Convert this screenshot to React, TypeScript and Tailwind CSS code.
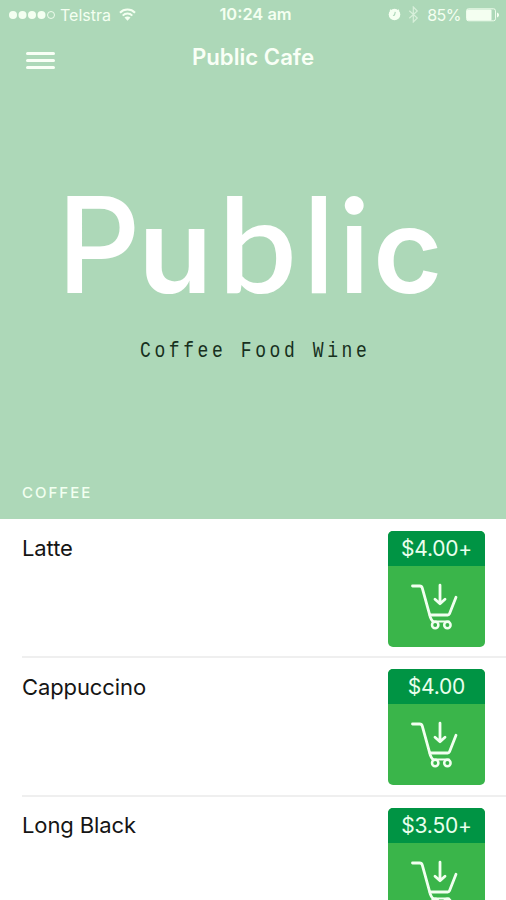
import type { ReactNode } from 'react';

type MenuItem = { name: string; price: string };

const items: MenuItem[] = [
  { name: 'Latte', price: '$4.00+' },
  { name: 'Cappuccino', price: '$4.00' },
  { name: 'Long Black', price: '$3.50+' },
];

function StatusBar() {
  return (
    <div className="grid h-[29px] grid-cols-[1fr_auto_1fr] items-center pr-[6px] pl-[9px] text-[16px] leading-none text-[#f4fff1]">
      <div className="flex items-center">
        <svg width="47" height="10" viewBox="0 0 47 10" fill="currentColor">
          <circle cx="4" cy="5" r="4" />
          <circle cx="13.5" cy="5" r="4" />
          <circle cx="23" cy="5" r="4" />
          <circle cx="32.5" cy="5" r="4" />
          <circle cx="42" cy="5" r="3.5" fill="none" stroke="currentColor" strokeWidth="0.9" />
        </svg>
        <span className="ml-[4px]">Telstra</span>
        <svg className="ml-[8px]" width="17" height="13" viewBox="0 0 17 13" fill="none" stroke="currentColor" strokeWidth="2">
          <path d="M1 4.7C5 .5 12 .5 16 4.7M3.7 7.6c2.7-2.7 6.9-2.7 9.6 0" />
          <path d="M8.5 12.8 5.5 9.6c1.7-1.5 4.3-1.5 6 0z" fill="currentColor" stroke="none" />
        </svg>
      </div>
      <span className="ml-[2px] text-[16.4px] font-semibold">10:24 am</span>
      <div className="flex items-center justify-end">
        <svg width="13" height="13" viewBox="0 0 13 13">
          <circle cx="6.5" cy="6.5" r="5.8" fill="currentColor" />
          <path d="M2.2 2.7 3 1.9M10.8 2.7 10 1.9" stroke="currentColor" strokeWidth="1.6" />
          <path d="M7.3 3.8 6.5 7 5 7.6" fill="none" stroke="#acd7b8" strokeWidth="1.1" />
        </svg>
        <svg className="ml-[7px] opacity-60" width="11" height="17" viewBox="0 0 11 17" fill="none" stroke="currentColor" strokeWidth="1.2">
          <path d="m1.3 4.8 8 7.2-4 4V1l4 4-8 7.2" />
        </svg>
        <span className="ml-[8px] tracking-[-0.5px]">85%</span>
        <svg className="ml-[5px]" width="34" height="14" viewBox="0 0 34 14">
          <rect x="0.5" y="0.8" width="29" height="12" rx="2" fill="none" stroke="currentColor" strokeWidth="0.9" />
          <rect x="1" y="1.4" width="24.5" height="11" rx="1" fill="currentColor" />
          <path d="M31 4.5c2.7 1 2.7 4 0 5z" fill="currentColor" />
        </svg>
      </div>
    </div>
  );
}

function NavBar() {
  return (
    <div className="grid h-[56px] grid-cols-[1fr_auto_1fr] items-center px-[26px] text-[#f9fff6]">
      <button className="mt-[6px] flex w-[29px] flex-col gap-[4px]" aria-label="Menu">
        <span className="h-[3px] w-full rounded-full bg-current" />
        <span className="h-[3px] w-full rounded-full bg-current" />
        <span className="h-[3px] w-full rounded-full bg-current" />
      </button>
      <h1 className="text-[22.2px] leading-none font-semibold">Public Cafe</h1>
    </div>
  );
}

function Letter({ className, children }: { className: string; children: ReactNode }) {
  return <span className={`block shrink-0 origin-left leading-[140px] ${className}`}>{children}</span>;
}

function Hero() {
  return (
    <div className="flex h-[380px] flex-col pt-[88px]">
      <div className="flex h-[140px] items-baseline pl-[57px] text-white">
        <Letter className="w-[81px] scale-x-[0.98] text-[133px] font-medium">P</Letter>
        <Letter className="w-[80px] scale-x-[1.04] text-[117px] font-semibold">u</Letter>
        <Letter className="w-[85px] scale-x-[1.07] font-[Lato,sans-serif] text-[131px] font-semibold">b</Letter>
        <Letter className="w-[35px] font-[Lato,sans-serif] text-[131px] font-semibold">l</Letter>
        <Letter className="w-[35px] font-[Lato,sans-serif] text-[131px] font-semibold">i</Letter>
        <Letter className="w-[70px] scale-x-[1.02] text-[117px] font-semibold">c</Letter>
      </div>
      <p className="mt-[24px] ml-[140px] w-fit origin-left scale-x-[0.8] font-['Liberation_Mono',monospace] text-[22.5px] leading-[28px] tracking-[4.5px] whitespace-nowrap text-[#17301d]">
        Coffee Food Wine
      </p>
    </div>
  );
}

function CartIcon() {
  return (
    <svg width="52" height="50" viewBox="0 0 52 50" fill="none" stroke="#f1fff0" strokeWidth="2.8" strokeLinecap="round" strokeLinejoin="round">
      <path d="M1.5 4h7.2q2 0 2.6 2.2l8 29q.8 2.6 2.8 4.6" />
      <path d="M19 33h17.8q1.2 0 1.7-1.2L45 15.3" />
      <path d="M22 39.6h16" strokeWidth="2" />
      <circle cx="24.2" cy="43" r="3.2" fill="#3ab54a" strokeWidth="2.5" />
      <circle cx="36.4" cy="43" r="3.2" fill="#3ab54a" strokeWidth="2.5" />
      <path d="M29 3.2v18M24 17.2l5 4.5 5-4.5" />
    </svg>
  );
}

function MenuRow({ item }: { item: MenuItem }) {
  return (
    <li className="flex h-[138.4px] justify-between border-b-2 border-[#efefef] pt-[11px] pr-[21px]">
      <span className="pt-[3.3px] text-[22px] leading-[28px] tracking-[-0.1px] text-[#151515]">{item.name}</span>
      <button className="flex h-[116px] w-[97px] flex-col overflow-hidden rounded-[5px] bg-[#3ab54a]">
        <span className="h-[35px] w-full bg-[#009444] text-center text-[21px] leading-[36px] tracking-[-0.2px] text-[#e9ffed]">
          {item.price}
        </span>
        <span className="flex w-full justify-center pt-[16px]">
          <CartIcon />
        </span>
      </button>
    </li>
  );
}

export default function App() {
  return (
    <div className="h-[900px] w-[506px] overflow-hidden bg-white font-[Inter,sans-serif]">
      <header className="h-[519px] bg-[#add8b8]">
        <StatusBar />
        <NavBar />
        <Hero />
        <h2 className="pl-[22px] text-[15px] leading-[56px] font-medium tracking-[2px] text-[#f2fff0]">COFFEE</h2>
      </header>
      <ul className="pt-px pl-[22px]">
        {items.map((item) => (
          <MenuRow key={item.name} item={item} />
        ))}
      </ul>
    </div>
  );
}
